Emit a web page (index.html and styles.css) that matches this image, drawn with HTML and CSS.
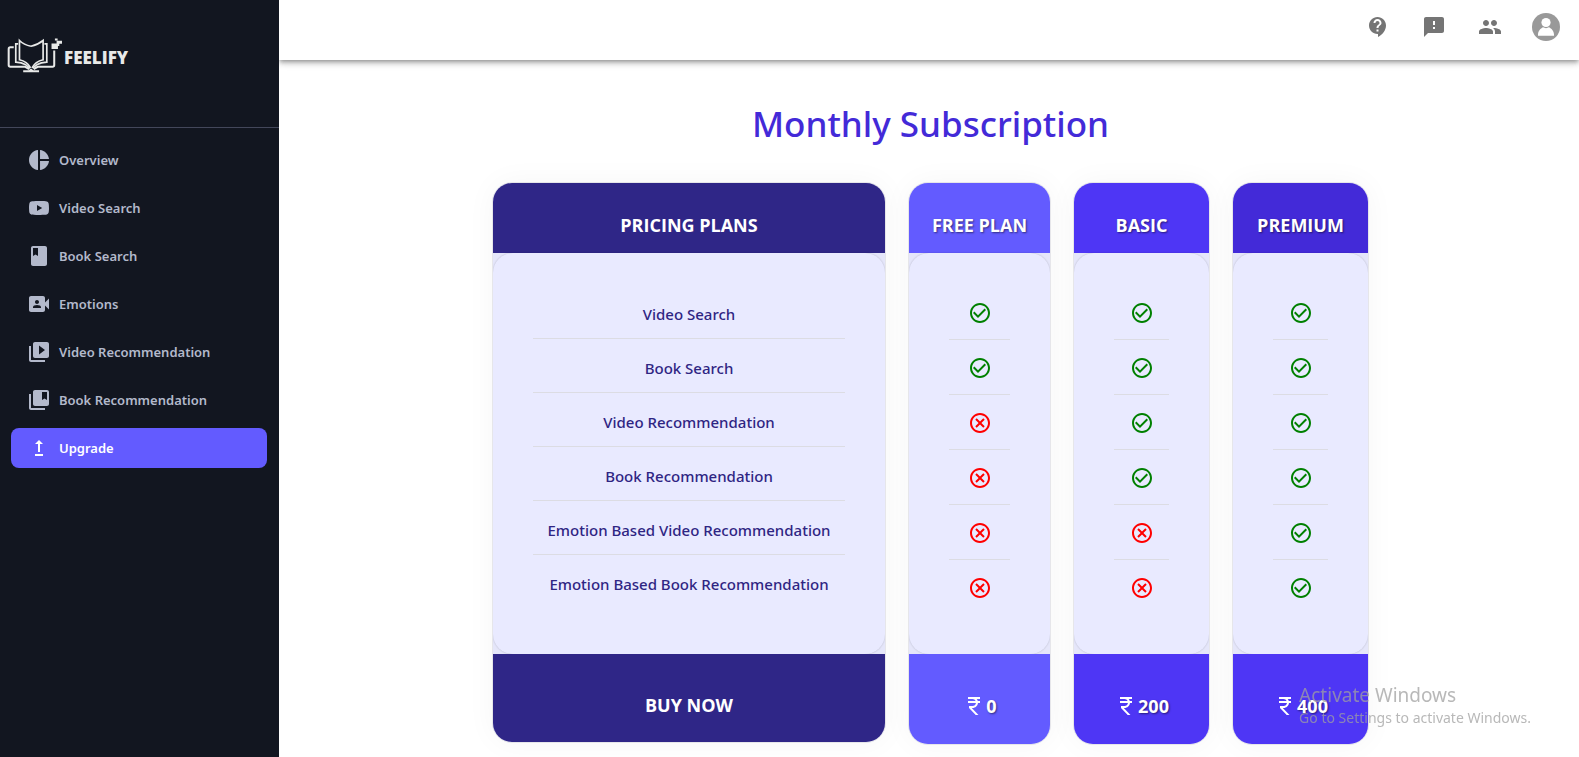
FILE: index.html
```html
<!DOCTYPE html>
<html lang="en">
<head>
<meta charset="utf-8">
<meta name="viewport" content="width=device-width, initial-scale=1">
<title>Feelify - Upgrade</title>
<link rel="stylesheet" href="styles.css">
</head>
<body>
<svg class="sprite" aria-hidden="true">
  <symbol id="check" viewBox="0 0 24 24"><path d="M16.59 7.58 10 14.17l-3.59-3.58L5 12l5 5 8-8zM12 2C6.48 2 2 6.48 2 12s4.48 10 10 10 10-4.48 10-10S17.52 2 12 2m0 18c-4.42 0-8-3.58-8-8s3.58-8 8-8 8 3.58 8 8-3.58 8-8 8"/></symbol>
  <symbol id="cross" viewBox="0 0 24 24"><path d="M15.3 7.3L12 10.6 8.700 7.300 7.300 8.700 10.600 12 7.300 15.300 8.700 16.700 12 13.400 15.300 16.700 16.700 15.300 13.400 12 16.700 8.700zM12 2C6.470 2 2 6.470 2 12s4.470 10 10 10 10-4.470 10-10S17.530 2 12 2zm0 18c-4.410 0-8-3.590-8-8s3.590-8 8-8 8 3.590 8 8-3.590 8-8 8z"/></symbol>
  <symbol id="rupee" viewBox="0 0 24 24"><path d="M13.66 7c-.56-1.18-1.76-2-3.16-2H6V3h12v2h-3.26c.48.58.84 1.26 1.05 2H18v2h-2.02c-.25 2.8-2.61 5-5.48 5h-.73l6.73 7h-2.77L7 14v-2h3.5c1.76 0 3.22-1.3 3.46-3H6V7h7.66z"/></symbol>
</svg>
<div class="app">
  <aside class="sidebar">
    <a class="brand" href="#">
      <svg class="brand-mark" viewBox="22 52 166 106" aria-hidden="true">
        <g fill="none" stroke="#e8e9e8" stroke-width="6">
          <path d="M42 82H32q-5 0-5 5v48q0 5 5 5h44l12 7"/>
          <path d="M162 92v43q0 5-5 5h-44l-12 7"/>
        </g>
        <g fill="none" stroke="#e8e9e8" stroke-width="5">
          <path d="M55 72h-7v54q18 1 28 7l14 11"/>
          <path d="M133 72h7v54q-18 1-28 7l-14 11"/>
          <path d="M93 79C82 77 68 71 59 62v57c14 3 26 11 33 24"/>
          <path d="M93 79c11-2 25-8 36-17v57c-14 3-26 11-33 24"/>
        </g>
        <g fill="#e8e9e8">
          <path d="M70 150h16l7-5 7 5h17v6H70z"/>
          <path d="M154 71h15v-8h16v9h-8v6h-4v9h-19zM164 56h8v6h-8z"/>
        </g>
      </svg>
      <span class="brand-name">FEELIFY</span>
    </a>
    <nav class="nav">
      <a class="nav-item" href="#"><svg class="icon" viewBox="0 0 24 24"><path d="M11 2v20c-5.07-.5-9-4.79-9-10s3.93-9.5 9-10zm2.03 0v8.99H22c-.47-4.74-4.24-8.52-8.97-8.99zm0 11.01V22c4.74-.47 8.5-4.25 8.97-8.99h-8.97z"/></svg>Overview</a>
      <a class="nav-item" href="#"><svg class="icon" viewBox="0 0 24 24"><path d="M10 15l5.19-3L10 9v6m11.56-7.83c.13.47.22 1.1.28 1.9.07.8.1 1.49.1 2.09L22 12c0 2.19-.16 3.8-.44 4.83-.25.9-.83 1.48-1.73 1.73-.47.13-1.33.22-2.65.28-1.3.07-2.49.1-3.59.1L12 19c-4.19 0-6.8-.16-7.83-.44-.9-.25-1.48-.83-1.73-1.73-.13-.47-.22-1.1-.28-1.9-.07-.8-.1-1.49-.1-2.09L2 12c0-2.19.16-3.8.44-4.83.25-.9.83-1.48 1.73-1.73.47-.13 1.33-.22 2.65-.28 1.3-.07 2.49-.1 3.59-.1L12 5c4.19 0 6.8.16 7.83.44.9.25 1.48.83 1.73 1.73z"/></svg>Video Search</a>
      <a class="nav-item" href="#"><svg class="icon" viewBox="0 0 24 24"><path d="M18 2H6c-1.1 0-2 .9-2 2v16c0 1.1.9 2 2 2h12c1.1 0 2-.9 2-2V4c0-1.1-.9-2-2-2zM6 4h5v8l-2.5-1.5L6 12V4z"/></svg>Book Search</a>
      <a class="nav-item" href="#"><svg class="icon" viewBox="0 0 24 24"><path d="M18 10.48V6c0-1.1-.9-2-2-2H4c-1.1 0-2 .9-2 2v12c0 1.1.9 2 2 2h12c1.1 0 2-.9 2-2v-4.48l4 3.98v-11l-4 3.98zM10 8c1.1 0 2 .9 2 2s-.9 2-2 2-2-.9-2-2 .9-2 2-2zm4 8H6v-.57c0-.81.48-1.53 1.22-1.85.85-.37 1.79-.58 2.78-.58.99 0 1.93.21 2.78.58.74.32 1.22 1.04 1.22 1.85V16z"/></svg>Emotions</a>
      <a class="nav-item" href="#"><svg class="icon" viewBox="0 0 24 24"><path d="M4 6H2v14c0 1.1.9 2 2 2h14v-2H4V6zm16-4H8c-1.1 0-2 .9-2 2v12c0 1.1.9 2 2 2h12c1.1 0 2-.9 2-2V4c0-1.1-.9-2-2-2zm-8 12.5v-9l6 4.5-6 4.5z"/></svg>Video Recommendation</a>
      <a class="nav-item" href="#"><svg class="icon" viewBox="0 0 24 24"><path d="M4 6H2v14c0 1.1.9 2 2 2h14v-2H4V6zm16-4H8c-1.1 0-2 .9-2 2v12c0 1.1.9 2 2 2h12c1.1 0 2-.9 2-2V4c0-1.1-.9-2-2-2zm0 10l-2.5-1.5L15 12V4h5v8z"/></svg>Book Recommendation</a>
      <a class="nav-item nav-item-active" href="#" aria-current="page"><svg class="icon" viewBox="0 0 24 24"><path d="M16 18v2H8v-2h8zM11 7.99V16h2V7.99h3L12 4 8 7.99h3z"/></svg>Upgrade</a>
    </nav>
  </aside>
  <div class="page">
    <header class="topbar">
      <div class="topbar-links">
        <button class="icon-button" type="button" aria-label="Support"><svg class="icon" viewBox="0 0 24 24"><path d="M11.5 2C6.81 2 3 5.81 3 10.5S6.81 19 11.5 19h.5v3c4.86-2.34 8-7 8-11.5C20 5.81 16.19 2 11.5 2zm1 14.5h-2v-2h2v2zm0-3.5h-2c0-3.25 3-3 3-5 0-1.1-.9-2-2-2s-2 .9-2 2h-2c0-2.21 1.79-4 4-4s4 1.79 4 4c0 2.5-3 2.75-3 5z"/></svg></button>
        <button class="icon-button" type="button" aria-label="Feedback"><svg class="icon" viewBox="0 0 24 24"><path d="M20 2H4c-1.1 0-1.99.9-1.99 2L2 22l4-4h14c1.1 0 2-.9 2-2V4c0-1.1-.9-2-2-2zm-7 12h-2v-2h2v2zm0-4h-2V6h2v4z"/></svg></button>
        <button class="icon-button" type="button" aria-label="People"><svg class="icon" viewBox="0 0 24 24"><path d="M16 11c1.66 0 2.99-1.34 2.99-3S17.66 5 16 5c-1.66 0-3 1.34-3 3s1.34 3 3 3zm-8 0c1.66 0 2.99-1.34 2.99-3S9.66 5 8 5C6.34 5 5 6.34 5 8s1.34 3 3 3zm0 2c-2.33 0-7 1.17-7 3.5V19h14v-2.5c0-2.33-4.67-3.5-7-3.5zm8 0c-.29 0-.62.02-.97.05 1.16.84 1.97 1.97 1.97 3.45V19h6v-2.5c0-2.33-4.67-3.5-7-3.5z"/></svg></button>
      </div>
      <button class="icon-button" type="button" aria-label="Account"><svg class="avatar" viewBox="0 0 28 28"><circle cx="14" cy="14" r="14" fill="#999"/><circle cx="14" cy="9.500" r="4.600" fill="#fff"/><path d="M6 22.700v-1.200c0-3.600 2.600-6 5-7.200 1.900 1.100 4.100 1.100 6 0 2.400 1.200 5 3.600 5 7.200v1.200z" fill="#fff"/></svg></button>
    </header>
    <main class="content">
      <h1 class="title">Monthly Subscription</h1>
      <div class="plans">
        <section class="plan plan-labels">
          <h2 class="plan-head">PRICING PLANS</h2>
          <ul class="plan-body">
            <li>Video Search</li>
            <li>Book Search</li>
            <li>Video Recommendation</li>
            <li>Book Recommendation</li>
            <li>Emotion Based Video Recommendation</li>
            <li>Emotion Based Book Recommendation</li>
          </ul>
          <div class="plan-foot">BUY NOW</div>
        </section>
        <section class="plan plan-free">
          <h2 class="plan-head">FREE PLAN</h2>
          <ul class="plan-body">
            <li><svg class="icon yes" role="img" aria-label="Included"><use href="#check"/></svg></li>
            <li><svg class="icon yes" role="img" aria-label="Included"><use href="#check"/></svg></li>
            <li><svg class="icon no" role="img" aria-label="Not included"><use href="#cross"/></svg></li>
            <li><svg class="icon no" role="img" aria-label="Not included"><use href="#cross"/></svg></li>
            <li><svg class="icon no" role="img" aria-label="Not included"><use href="#cross"/></svg></li>
            <li><svg class="icon no" role="img" aria-label="Not included"><use href="#cross"/></svg></li>
          </ul>
          <button class="plan-foot" type="button"><svg class="icon" aria-hidden="true"><use href="#rupee"/></svg>0</button>
        </section>
        <section class="plan plan-basic">
          <h2 class="plan-head">BASIC</h2>
          <ul class="plan-body">
            <li><svg class="icon yes" role="img" aria-label="Included"><use href="#check"/></svg></li>
            <li><svg class="icon yes" role="img" aria-label="Included"><use href="#check"/></svg></li>
            <li><svg class="icon yes" role="img" aria-label="Included"><use href="#check"/></svg></li>
            <li><svg class="icon yes" role="img" aria-label="Included"><use href="#check"/></svg></li>
            <li><svg class="icon no" role="img" aria-label="Not included"><use href="#cross"/></svg></li>
            <li><svg class="icon no" role="img" aria-label="Not included"><use href="#cross"/></svg></li>
          </ul>
          <button class="plan-foot" type="button"><svg class="icon" aria-hidden="true"><use href="#rupee"/></svg>200</button>
        </section>
        <section class="plan plan-premium">
          <h2 class="plan-head">PREMIUM</h2>
          <ul class="plan-body">
            <li><svg class="icon yes" role="img" aria-label="Included"><use href="#check"/></svg></li>
            <li><svg class="icon yes" role="img" aria-label="Included"><use href="#check"/></svg></li>
            <li><svg class="icon yes" role="img" aria-label="Included"><use href="#check"/></svg></li>
            <li><svg class="icon yes" role="img" aria-label="Included"><use href="#check"/></svg></li>
            <li><svg class="icon yes" role="img" aria-label="Included"><use href="#check"/></svg></li>
            <li><svg class="icon yes" role="img" aria-label="Included"><use href="#check"/></svg></li>
          </ul>
          <button class="plan-foot" type="button"><svg class="icon" aria-hidden="true"><use href="#rupee"/></svg>400</button>
        </section>
      </div>
    </main>
  </div>
</div>
<div class="watermark">
  <div class="watermark-title">Activate Windows</div>
  <div>Go to Settings to activate Windows.</div>
</div>
</body>
</html>
```
FILE: styles.css
```css
* { box-sizing: border-box; }

body {
  margin: 0;
  background: #fff;
  font-family: "Noto Sans", "Open Sans", sans-serif;
}

.sprite { display: none; }

.icon {
  display: block;
  flex: none;
  width: 24px;
  height: 24px;
  fill: currentColor;
}

.app {
  display: flex;
  min-height: 100vh;
}

/* Sidebar */
.sidebar {
  flex: none;
  width: 279px;
  background: #121620;
}

.brand {
  display: flex;
  align-items: center;
  gap: 1px;
  height: 128px;
  padding: 0 7px 18px;
  border-bottom: 1px solid #43475a;
  color: #e8e9e8;
  text-decoration: none;
}

.brand-mark {
  width: 56px;
  height: 36px;
}

.brand-name {
  padding-top: 6px;
  font-family: "Open Sans", "Noto Sans", sans-serif;
  font-size: 17px;
  font-weight: 800;
  line-height: 24px;
}

.nav {
  display: flex;
  flex-direction: column;
  gap: 8px;
  padding: 12px 12px 12px 11px;
}

.nav-item {
  display: flex;
  align-items: center;
  gap: 8px;
  height: 40px;
  padding: 0 16px;
  border-radius: 8px;
  color: #b3b9cb;
  font-size: 13px;
  font-weight: 600;
  text-decoration: none;
}

.nav-item-active {
  background: #635bff;
  color: #fff;
}

/* Top bar */
.page {
  flex: 1;
  min-width: 0;
}

.topbar {
  display: flex;
  align-items: center;
  justify-content: flex-end;
  gap: 30px;
  height: 60px;
  padding: 0 19px 6px;
  box-shadow: 0 2px 4px -1px rgba(0, 0, 0, 0.3), 0 4px 5px rgba(0, 0, 0, 0.14), 0 1px 10px rgba(0, 0, 0, 0.12);
  clip-path: inset(0 0 -20px 0);
}

.topbar-links {
  display: flex;
  gap: 32px;
}

.icon-button {
  padding: 0;
  border: 0;
  background: none;
  color: #757575;
}

.avatar {
  display: block;
  width: 28px;
  height: 28px;
}

/* Pricing */
.content {
  padding: 36px 16px 12px 19px;
}

.title {
  margin: 0 0 30px;
  color: #432ad8;
  font-size: 35px;
  font-weight: 500;
  line-height: 56px;
  text-align: center;
}

.plans {
  display: grid;
  grid-template-columns: minmax(0, 394px) 143px 137px 137px;
  justify-content: center;
  align-items: start;
  column-gap: 22px;
}

.plan {
  overflow: hidden;
  border: 1px solid #e6e6ea;
  border-radius: 20px;
  background: #e5e6fa;
  box-shadow: 0 0 30px rgba(0, 0, 0, 0.04);
  color: #fff;
  text-align: center;
}

.plan-head,
.plan-foot {
  font-family: "Open Sans", "Noto Sans", sans-serif;
  font-size: 18px;
  font-weight: 700;
  line-height: 24px;
}

.plan-head {
  margin: 0;
  padding: 30px 0 16px;
  background: var(--head);
  white-space: nowrap;
}

.plan-body {
  min-height: 401px;
  margin: 0;
  padding: 32px 40px;
  border-radius: 20px;
  background: #e9eaff;
  box-shadow: 0 0 2px rgba(0, 0, 0, 0.2);
  list-style: none;
}

.plan-body li {
  display: flex;
  justify-content: center;
  padding: 16px 0 14px;
  border-bottom: 1px solid #dcdce3;
}

.plan-body li:last-child { border-bottom: 0; }

.plan-labels li {
  padding: 17px 0 12px;
  color: #2f2583;
  font-size: 15px;
  font-weight: 500;
  line-height: 24px;
  white-space: nowrap;
}

.plan-foot {
  display: flex;
  align-items: center;
  justify-content: center;
  width: 100%;
  height: 90px;
  padding: 13px 0 0;
  border: 0;
  background: var(--foot);
  color: #fff;
  text-shadow: inherit;
}

.plan-labels .plan-foot { height: 88px; }

.plan-free,
.plan-basic,
.plan-premium { text-shadow: 1px 1px 2px rgba(0, 0, 0, 0.5); }

.plan-labels { --head: #2f2687; --foot: #2f2687; }
.plan-free { --head: #635bff; --foot: #635bff; }
.plan-basic { --head: #4e36f5; --foot: #4e36f5; }
.plan-premium { --head: #432ad8; --foot: #4e36f5; }

.yes { color: #008000; }
.no { color: #f00; }

/* System notice that floats over the page */
.watermark {
  position: fixed;
  right: 48px;
  bottom: 29px;
  color: rgba(160, 160, 160, 0.75);
  font-size: 14px;
  line-height: 20px;
  pointer-events: none;
}

.watermark-title {
  font-size: 19px;
  line-height: 26px;
}
```
